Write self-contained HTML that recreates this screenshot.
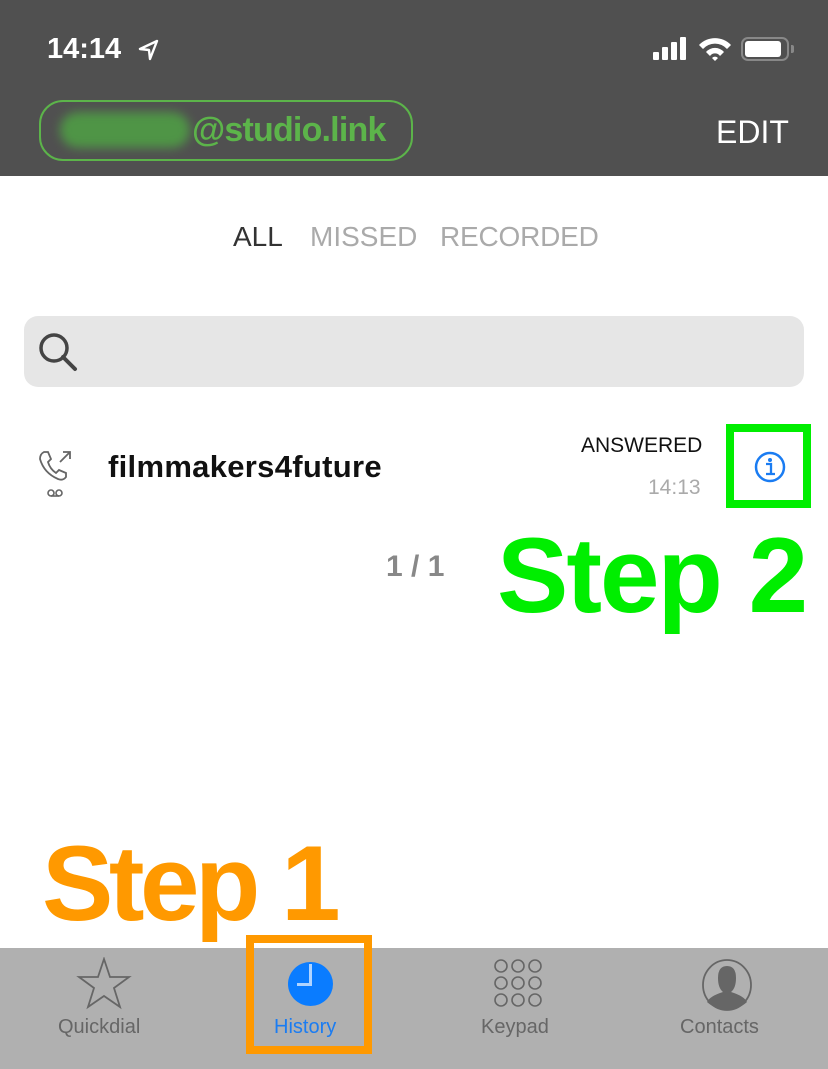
<!DOCTYPE html>
<html><head><meta charset="utf-8"><style>
*{margin:0;padding:0;box-sizing:border-box}
body{width:828px;height:1069px;position:relative;overflow:hidden;background:#fff;font-family:"Liberation Sans",sans-serif}
.abs{position:absolute}
</style></head><body>
<div class="abs" style="left:0;top:0;width:828px;height:176px;background:#505050"></div>
<div class="abs" style="left:47px;top:33px;color:#fff;font-size:29px;font-weight:bold">14:14</div>
<svg class="abs" style="left:137px;top:38px" width="24" height="24" viewBox="0 0 24 24"><path d="M20 3 L3 11 L12 12 L13 21 Z" fill="none" stroke="#fff" stroke-width="2.4" stroke-linejoin="round"/></svg>
<div class="abs" style="left:653px;top:52px;width:6px;height:8px;background:#fff;border-radius:1px"></div>
<div class="abs" style="left:662px;top:47px;width:6px;height:13px;background:#fff;border-radius:1px"></div>
<div class="abs" style="left:671px;top:42px;width:6px;height:18px;background:#fff;border-radius:1px"></div>
<div class="abs" style="left:680px;top:37px;width:6px;height:23px;background:#fff;border-radius:1px"></div>
<svg class="abs" style="left:697px;top:36px" width="36" height="26" viewBox="0 0 36 26"><path d="M2 9 A22 22 0 0 1 34 9 L30 13 A16 16 0 0 0 6 13Z M9 16 A12 12 0 0 1 27 16 L23 20 A6 6 0 0 0 13 20Z M15 22 A4 4 0 0 1 21 22 L18 25Z" fill="#fff"/></svg>
<div class="abs" style="left:741px;top:37px;width:48px;height:24px;border:2px solid #888;border-radius:7px"></div>
<div class="abs" style="left:745px;top:41px;width:36px;height:16px;background:#fff;border-radius:3px"></div>
<div class="abs" style="left:791px;top:45px;width:3px;height:8px;background:#888;border-radius:0 2px 2px 0"></div>
<div class="abs" style="left:39px;top:100px;width:374px;height:61px;border:2px solid #5cb44a;border-radius:24px"></div>
<div class="abs" style="left:60px;top:112px;width:130px;height:36px;background:#4f9d45;border-radius:18px;filter:blur(5px);opacity:.9"></div>
<div class="abs" style="left:192px;top:111px;color:#5cb44a;font-size:34px;font-weight:bold;letter-spacing:-0.8px">@studio.link</div>
<div class="abs" style="left:716px;top:114px;color:#fff;font-size:32px">EDIT</div>

<div class="abs" style="left:233px;top:221px;color:#333;font-size:28px">ALL</div>
<div class="abs" style="left:310px;top:221px;color:#aaa;font-size:28px">MISSED</div>
<div class="abs" style="left:440px;top:221px;color:#aaa;font-size:28px;letter-spacing:-0.2px">RECORDED</div>

<div class="abs" style="left:24px;top:316px;width:780px;height:71px;background:#e6e6e6;border-radius:14px"></div>
<svg class="abs" style="left:36px;top:330px" width="44" height="44" viewBox="0 0 44 44"><circle cx="18" cy="18" r="13" fill="none" stroke="#444" stroke-width="3.5"/><path d="M27 27 L39 39" stroke="#444" stroke-width="4" stroke-linecap="round"/></svg>

<svg class="abs" style="left:36px;top:448px" width="40" height="50" viewBox="0 0 40 50"><path d="M8 4 L12 4 L15 11 L12 14 Q14 21 20 25 L23 22 L30 25 L30 29 Q27 33 22 31 Q8 25 4 11 Q4 6 8 4Z" fill="none" stroke="#666" stroke-width="1.8"/><path d="M24 14 L34 4 M27 4 L34 4 L34 11" fill="none" stroke="#666" stroke-width="1.8"/><circle cx="15" cy="45" r="3" fill="none" stroke="#666" stroke-width="1.6"/><circle cx="23" cy="45" r="3" fill="none" stroke="#666" stroke-width="1.6"/><path d="M15 48 L23 48" stroke="#666" stroke-width="1.6"/></svg>
<div class="abs" style="left:108px;top:449px;color:#111;font-size:31px;font-weight:bold;letter-spacing:0.3px">filmmakers4future</div>
<div class="abs" style="left:581px;top:434px;color:#111;font-size:21px">ANSWERED</div>
<div class="abs" style="left:648px;top:476px;color:#aaa;font-size:21px">14:13</div>
<div class="abs" style="left:726px;top:424px;width:85px;height:84px;border:8px solid #00ee00"></div>
<svg class="abs" style="left:753px;top:450px" width="34" height="34" viewBox="0 0 34 34"><circle cx="17" cy="17" r="14" fill="none" stroke="#1a7cf2" stroke-width="2.5"/><circle cx="17" cy="10" r="2" fill="#1a7cf2"/><path d="M13 14 L18 14 L18 24 M13 24 L22 24" fill="none" stroke="#1a7cf2" stroke-width="2.3"/></svg>
<div class="abs" style="left:386px;top:550px;color:#888;font-size:30px;font-weight:bold">1 / 1</div>
<div class="abs" style="left:497px;top:517px;color:#00ee00;font-size:107px;font-weight:bold;letter-spacing:-2px;line-height:1.1">Step 2</div>
<div class="abs" style="left:42px;top:825px;color:#ff9900;font-size:107px;font-weight:bold;letter-spacing:-4.5px;line-height:1.1">Step 1</div>

<div class="abs" style="left:0;top:948px;width:828px;height:121px;background:#b0b0b0"></div>
<svg class="abs" style="left:76px;top:957px" width="56" height="54" viewBox="0 0 56 54"><path d="M28 2 L34 20 L53 20 L38 31 L44 50 L28 39 L12 50 L18 31 L3 20 L22 20Z" fill="none" stroke="#666" stroke-width="1.8"/></svg>
<div class="abs" style="left:58px;top:1016px;color:#666;font-size:20px">Quickdial</div>
<div class="abs" style="left:288px;top:962px;width:45px;height:44px;border-radius:50%;background:#0a7cff"></div>
<div class="abs" style="left:309px;top:964px;width:3px;height:22px;background:#b0d4ff"></div>
<div class="abs" style="left:297px;top:983px;width:15px;height:3px;background:#b0d4ff"></div>
<div class="abs" style="left:274px;top:1016px;color:#1a7cf2;font-size:20px">History</div>
<div class="abs" style="left:246px;top:935px;width:126px;height:119px;border:8px solid #ff9900"></div>
<svg class="abs" style="left:492px;top:957px" width="52" height="52" viewBox="0 0 52 52" fill="none" stroke="#666" stroke-width="1.6"><circle cx="9" cy="9" r="6"/><circle cx="26" cy="9" r="6"/><circle cx="43" cy="9" r="6"/><circle cx="9" cy="26" r="6"/><circle cx="26" cy="26" r="6"/><circle cx="43" cy="26" r="6"/><circle cx="9" cy="43" r="6"/><circle cx="26" cy="43" r="6"/><circle cx="43" cy="43" r="6"/></svg>
<div class="abs" style="left:481px;top:1016px;color:#666;font-size:20px">Keypad</div>
<svg class="abs" style="left:700px;top:958px" width="54" height="54" viewBox="0 0 54 54"><ellipse cx="27" cy="27" rx="24" ry="25" fill="none" stroke="#666" stroke-width="1.8"/><path d="M27 8 Q36 8 36 20 Q36 30 31 34 Q44 38 47 44 Q38 52 27 52 Q16 52 7 44 Q10 38 23 34 Q18 30 18 20 Q18 8 27 8Z" fill="#666"/></svg>
<div class="abs" style="left:680px;top:1016px;color:#666;font-size:20px">Contacts</div>
</body></html>
